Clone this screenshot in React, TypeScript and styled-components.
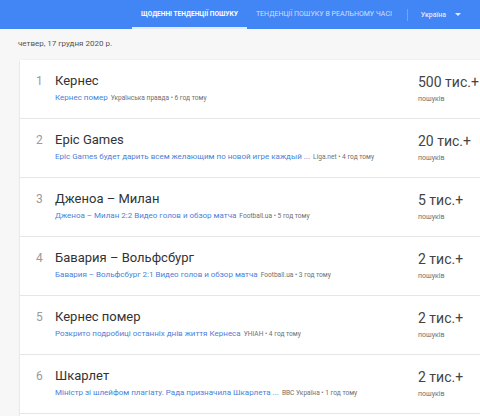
import React from "react";
import styled, { createGlobalStyle } from "styled-components";

const Global = createGlobalStyle`
  html, body { margin: 0; padding: 0; }
  body {
    background: #f7f7f7;
    font-family: Roboto, "Noto Sans", Arial, sans-serif;
    overflow: hidden;
    width: 480px;
    height: 416px;
  }
`;

const Header = styled.header`
  height: 29px;
  background: #4285f4;
  display: flex;
  align-items: stretch;
  padding-left: 132px;
  box-sizing: border-box;
`;

const Tab = styled.div<{ $active?: boolean }>`
  display: flex;
  align-items: center;
  padding: 0 9px;
  font-size: ${(p) => (p.$active ? 6.6 : 7)}px;
  font-weight: ${(p) => (p.$active ? 700 : 400)};
  text-transform: uppercase;
  color: ${(p) => (p.$active ? "#ffffff" : "rgba(255,255,255,0.75)")};
  border-bottom: 2px solid ${(p) => (p.$active ? "#e3ecfd" : "transparent")};
  box-sizing: border-box;
  white-space: nowrap;
`;

const Divider = styled.div`
  width: 1px;
  height: 12px;
  align-self: center;
  background: rgba(255, 255, 255, 0.25);
  margin-left: 6px;
`;

const Country = styled.div`
  display: flex;
  align-items: center;
  gap: 9px;
  margin-left: 13px;
  font-size: 7px;
  font-weight: 500;
  color: rgba(255, 255, 255, 0.85);
`;

const Caret = styled.span`
  width: 0;
  height: 0;
  border-left: 3px solid transparent;
  border-right: 3px solid transparent;
  border-top: 3px solid rgba(255, 255, 255, 0.85);
`;

const DateLine = styled.div`
  padding: 9px 0 0 18px;
  height: 22px;
  box-sizing: border-box;
  font-size: 8px;
  line-height: 10px;
  color: #555;
  margin-top: 1px;
`;

const Card = styled.div`
  margin: 8px 0 0 20px;
  width: 480px;
  background: #ffffff;
  box-shadow: 0 1px 2px rgba(0, 0, 0, 0.12), 0 0 1px rgba(0, 0, 0, 0.08);
`;

const Row = styled.div`
  display: grid;
  grid-template-columns: 19px 1fr 82px;
  height: 59px;
  box-sizing: border-box;
  padding-left: 16px;
  border-bottom: 1px solid #e6e6e6;
`;

const Index = styled.div`
  padding-top: 14px;
  font-size: 12px;
  line-height: 14px;
  color: #9a9a9a;
`;

const Main = styled.div`
  padding-top: 14px;
  min-width: 0;
`;

const Title = styled.div`
  font-size: 13px;
  line-height: 14px;
  color: #333;
  white-space: nowrap;
`;

const Sub = styled.div`
  margin-top: 5px;
  line-height: 10px;
  white-space: nowrap;
  display: flex;
  align-items: baseline;
  gap: 3px;
`;

const Link = styled.span`
  font-size: 8px;
  color: #4a7fd8;
`;

const Source = styled.span`
  font-size: 6.6px;
  color: #6f6f6f;
`;

const Stats = styled.div`
  padding-top: 13px;
`;

const Count = styled.div`
  font-size: 14px;
  line-height: 18px;
  color: #444;
  white-space: nowrap;
`;

const Unit = styled.div`
  margin-top: 3px;
  font-size: 7px;
  line-height: 10px;
  color: #707070;
`;

const items = [
  { t: "Кернес", l: "Кернес помер", s: "Українська правда • 6 год тому", c: "500 тис.+" },
  {
    t: "Epic Games",
    l: "Epic Games будет дарить всем желающим по новой игре каждый ...",
    s: "Liga.net • 4 год тому",
    c: "20 тис.+",
  },
  { t: "Дженоа – Милан", l: "Дженоа – Милан 2:2 Видео голов и обзор матча", s: "Football.ua • 5 год тому", c: "5 тис.+" },
  {
    t: "Бавария – Вольфсбург",
    l: "Бавария – Вольфсбург 2:1 Видео голов и обзор матча",
    s: "Football.ua • 3 год тому",
    c: "2 тис.+",
  },
  { t: "Кернес помер", l: "Розкрито подробиці останніх днів життя Кернеса", s: "УНІАН • 4 год тому", c: "2 тис.+" },
  {
    t: "Шкарлет",
    l: "Міністр зі шлейфом плагіату. Рада призначила Шкарлета ...",
    s: "BBC Україна • 1 год тому",
    c: "2 тис.+",
  },
  { t: "", l: "", s: "", c: "" },
];

export default function App() {
  return (
    <>
      <Global />
      <Header>
        <Tab $active>Щоденні тенденції пошуку</Tab>
        <Tab>Тенденції пошуку в реальному часі</Tab>
        <Divider />
        <Country>
          Україна
          <Caret />
        </Country>
      </Header>
      <DateLine>четвер, 17 грудня 2020 р.</DateLine>
      <Card>
        {items.map((it, i) => (
          <Row key={i}>
            <Index>{it.t ? i + 1 : ""}</Index>
            <Main>
              <Title>{it.t}</Title>
              <Sub>
                <Link>{it.l}</Link>
                <Source>{it.s}</Source>
              </Sub>
            </Main>
            <Stats>
              <Count>{it.c}</Count>
              {it.c && <Unit>пошуків</Unit>}
            </Stats>
          </Row>
        ))}
      </Card>
    </>
  );
}
